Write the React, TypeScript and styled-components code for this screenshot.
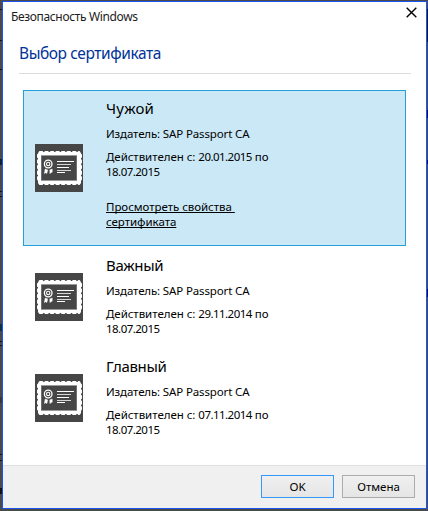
import React from "react";
import styled, { createGlobalStyle } from "styled-components";

const GlobalStyle = createGlobalStyle`
  * { box-sizing: border-box; }
  body {
    margin: 0;
    background: #4a4a4c;
    font-family: "Noto Sans", "Open Sans", sans-serif;
    color: #000;
  }
`;

const Desktop = styled.div`
  position: relative;
  height: 511px;
  padding: 1px 1px 2px 2px;
  overflow: hidden;
`;

const Speck = styled.i<{ $x: number; $y: number; $h: number; $color?: string }>`
  position: absolute;
  left: ${(p) => p.$x}px;
  top: ${(p) => p.$y}px;
  width: ${(p) => (p.$x ? 1 : 2)}px;
  height: ${(p) => p.$h}px;
  background: ${(p) => p.$color ?? "#111114"};
`;

const Dialog = styled.div`
  display: flex;
  flex-direction: column;
  width: 425px;
  height: 508px;
  border: 1px solid #1854f0;
  background: #fff;
`;

const TitleBar = styled.header`
  display: flex;
  justify-content: space-between;
  height: 35px;
  padding: 5px 9px 0 8px;
  font-size: 12px;
  line-height: 20px;
  letter-spacing: -0.35px;
  color: #1c1c1c;
`;

const CloseButton = styled.button`
  width: 11px;
  height: 11px;
  padding: 0;
  border: 0;
  background: none;
  svg { display: block; }
`;

const Heading = styled.h1`
  width: 392px;
  height: 37px;
  margin: 0 0 0 16px;
  padding-top: 4px;
  border-bottom: 1px solid #dcdcdc;
  font-size: 15.5px;
  font-weight: 400;
  line-height: 24px;
  letter-spacing: -0.42px;
  color: #003399;
`;

const List = styled.main`
  display: flex;
  flex: 1;
  flex-direction: column;
  gap: 1px;
  padding: 16px 0 0 20px;
`;

const Row = styled.section<{ $selected?: boolean }>`
  display: grid;
  grid-template-columns: 48px 1fr;
  column-gap: 23px;
  align-items: center;
  width: 383px;
  height: ${(p) => (p.$selected ? 156 : 100)}px;
  padding-left: 11px;
  border: 1px solid ${(p) => (p.$selected ? "#26a0da" : "transparent")};
  background: ${(p) => (p.$selected ? "#cbe8f6" : "transparent")};
`;

const Details = styled.div`
  align-self: start;
  padding-top: 5px;
  font-size: 11.5px;
  line-height: 15px;
`;

const Name = styled.h2<{ $tracking: number }>`
  margin: 0;
  font-size: 15px;
  font-weight: 400;
  line-height: 24px;
  letter-spacing: ${(p) => p.$tracking}px;
`;

const Issuer = styled.p`
  margin: 6px 0 8px;
  letter-spacing: -0.13px;
`;

const Validity = styled.p`
  margin: 0;
  letter-spacing: -0.04px;
`;

const DateText = styled.span`
  letter-spacing: -0.53px;
`;

const PropertiesLink = styled.a`
  display: block;
  margin-top: 20px;
  letter-spacing: -0.04px;
  white-space: pre;
  text-decoration: underline;
  text-decoration-skip-ink: none;
  text-underline-offset: 1px;
  text-decoration-thickness: 1px;
`;

const Footer = styled.footer`
  display: flex;
  justify-content: flex-end;
  gap: 8px;
  height: 43px;
  padding: 9px 11px 0 0;
  border-top: 1px solid #dfdfdf;
  background: #f0f0f0;
`;

const Button = styled.button<{ $primary?: boolean }>`
  width: 73px;
  height: 23px;
  padding: 0;
  border: 1px solid ${(p) => (p.$primary ? "#3399ff" : "#acacac")};
  background: linear-gradient(#f0f0f0, #e5e5e5);
  font: 11.5px/21px "Noto Sans", sans-serif;
  color: #000;
`;

function CertificateIcon() {
  return (
    <svg width="48" height="48" viewBox="0 0 48 48" aria-hidden="true">
      <rect width="48" height="48" fill="#464646" />
      <rect x="3" y="8" width="43" height="32" rx="1.5" fill="#fff" />
      <path
        d="M5 8.3H44M5 39.7H44M3.3 11V38M45.7 11V38"
        fill="none"
        stroke="#fff"
        strokeWidth="2.6"
        strokeLinecap="round"
        strokeDasharray="2 3.55"
      />
      <rect x="6" y="11" width="36" height="26" fill="#999" />
      <rect x="6.5" y="12" width="35" height="24" fill="#464646" />
      <circle cx="13.2" cy="20" r="3.8" fill="none" stroke="#fff" strokeWidth="1.3" />
      <circle cx="13.2" cy="20" r="1.7" fill="none" stroke="#fff" strokeWidth="1.1" />
      <path d="M10.2 25l2.4.9-.7 3.5-1.2-.7-1.3.8zM14.8 25.9l2.4-.9.0 3.2-1 .2-1.3 1.2z" fill="#fff" stroke="#fff" strokeWidth=".5" />
      <path d="M22 17.5H39M22 23.5H34M22 28.5H30" stroke="#fff" />
      <path d="M22 20.5H36M22 26.5H36" stroke="#d5d5d5" />
    </svg>
  );
}

const certificates = [
  { name: "Чужой", from: "20.01.2015", tracking: 0.2, selected: true },
  { name: "Важный", from: "29.11.2014", tracking: -0.3, selected: false },
  { name: "Главный", from: "07.11.2014", tracking: -0.3, selected: false },
];

const specks = [
  { x: 0, y: 9, h: 1 },
  { x: 0, y: 40, h: 1 },
  { x: 0, y: 69, h: 1 },
  { x: 0, y: 159, h: 6, color: "#0a2440" },
  { x: 0, y: 191, h: 1 },
  { x: 0, y: 196, h: 1 },
  { x: 0, y: 324, h: 7, color: "#0a2f4a" },
  { x: 0, y: 341, h: 1 },
  { x: 0, y: 345, h: 1 },
  { x: 0, y: 397, h: 6, color: "#38383a" },
  { x: 0, y: 454, h: 1 },
  { x: 0, y: 460, h: 1 },
  { x: 0, y: 488, h: 6 },
  { x: 427, y: 9, h: 33, color: "#17171a" },
  { x: 427, y: 110, h: 8, color: "#0a0a50" },
  { x: 427, y: 160, h: 4, color: "#0a0a50" },
  { x: 427, y: 289, h: 8, color: "#0a0a50" },
];

export default function App() {
  return (
    <Desktop>
      <GlobalStyle />
      {specks.map((s) => (
        <Speck key={`${s.x}-${s.y}`} $x={s.x} $y={s.y} $h={s.h} $color={s.color} />
      ))}
      <Dialog role="dialog">
        <TitleBar>
          <span>Безопасность Windows</span>
          <CloseButton aria-label="Закрыть">
            <svg width="11" height="11" viewBox="0 0 11 11">
              <path d="M.7.7l9.6 9.6M10.3.7L.7 10.3" stroke="#000" strokeWidth="1.4" />
            </svg>
          </CloseButton>
        </TitleBar>
        <Heading>Выбор сертификата</Heading>
        <List>
          {certificates.map((c) => (
            <Row key={c.name} $selected={c.selected}>
              <CertificateIcon />
              <Details>
                <Name $tracking={c.tracking}>{c.name}</Name>
                <Issuer>Издатель: SAP Passport CA</Issuer>
                <Validity>
                  Действителен с: <DateText>{c.from}</DateText> по
                  <br />
                  <DateText>18.07.2015</DateText>
                </Validity>
                {c.selected && (
                  <PropertiesLink>{"Просмотреть свойства \nсертификата"}</PropertiesLink>
                )}
              </Details>
            </Row>
          ))}
        </List>
        <Footer>
          <Button $primary>OK</Button>
          <Button>Отмена</Button>
        </Footer>
      </Dialog>
    </Desktop>
  );
}
